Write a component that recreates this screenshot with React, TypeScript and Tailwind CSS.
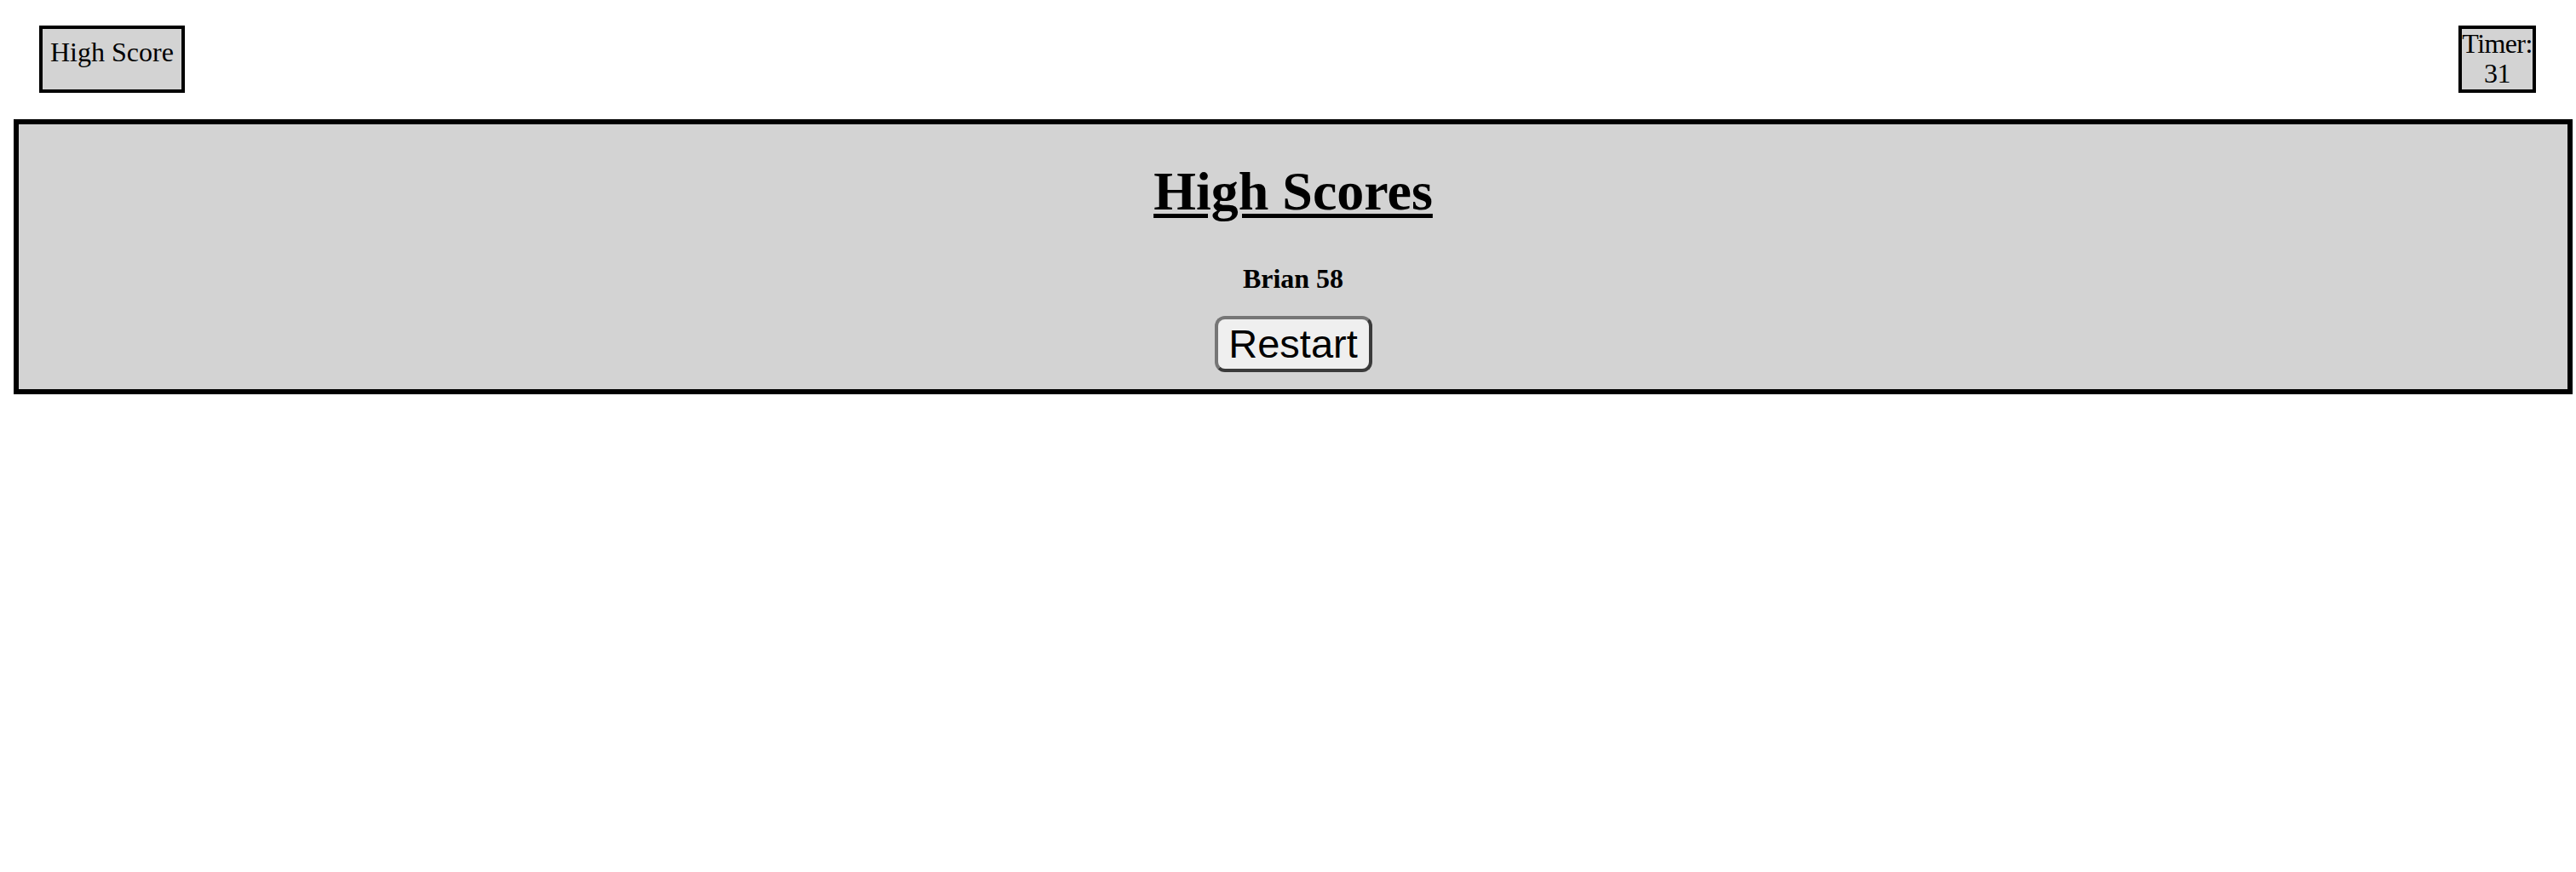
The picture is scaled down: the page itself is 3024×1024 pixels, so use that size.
import React from "react";

export default function App() {
  return (
    <div className="w-[3024px] h-[1024px] bg-white text-black" style={{ fontFamily: '"Liberation Serif", "Times New Roman", serif' }}>
      <div className="flex justify-between items-stretch pt-[30px] pl-[46px] pr-[47px]">
        <div className="border-[4px] border-black bg-[#d3d3d3] px-[9px] pt-[10px] text-[32px] leading-[35.4px] h-[79px] text-center">
          High Score
        </div>
        <div className="border-[4px] border-black bg-[#d3d3d3] w-[91px] text-[32px] leading-[35.4px] h-[79px] text-center tracking-[-0.6px]">
          Timer: 31
        </div>
      </div>
      <div className="ml-[16px] mt-[31px] w-[3004px] border-[6px] border-black bg-[#d3d3d3] flex flex-col items-center pt-[43px] pb-[20px]">
        <h1 className="text-[64px] font-bold leading-[71px] underline decoration-[5px] underline-offset-[5px]">
          High Scores
        </h1>
        <h4 className="mt-[49px] text-[32px] font-bold leading-[36px]">Brian 58</h4>
        <button
          className="mt-[26px] h-[66px] w-[185px] rounded-[12px] border-[4px] border-t-[#767676] border-l-[#767676] border-b-[#3a3a3a] border-r-[#3a3a3a] bg-[#efefef] text-[47px] leading-[54px] px-[12px] py-[2px] text-black"
          style={{ fontFamily: '"Liberation Sans", Arial, sans-serif' }}
        >
          Restart
        </button>
      </div>
    </div>
  );
}
